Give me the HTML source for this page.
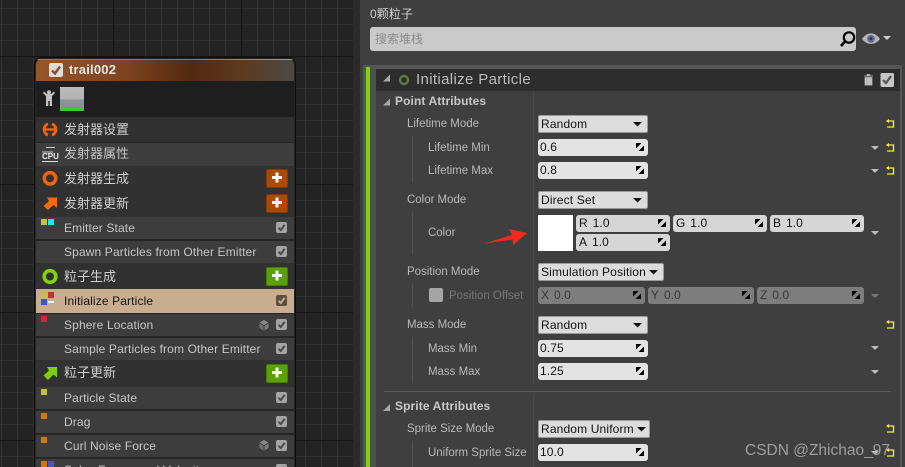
<!DOCTYPE html>
<html><head><meta charset="utf-8"><style>
html,body{margin:0;padding:0;width:905px;height:467px;overflow:hidden}
body{position:relative;background:#232323;font-family:"Liberation Sans","Noto Sans CJK SC",sans-serif;font-size:12px;color:#c8c8c8}
div,svg{position:absolute;box-sizing:border-box}
#clip{left:0;top:0;width:905px;height:467px;overflow:hidden}
#bg{left:0;top:0;width:353px;height:467px;background-color:#232323;background-image:linear-gradient(90deg,#141414 1px,transparent 1px),linear-gradient(#141414 1px,transparent 1px),linear-gradient(90deg,#303030 1px,transparent 1px),linear-gradient(#303030 1px,transparent 1px);background-size:128px 100%,100% 128px,16px 100%,100% 16px;background-position:113px 0,0 56px,1px 0,0 8px}
.t{white-space:nowrap;line-height:16px;height:16px}
.r{left:1px;width:258px;height:22px;background:#3d3d3d}
.g{left:1px;width:258px;background:#313131}
.n{left:29px;letter-spacing:.13px;color:#c6c6c6}
.c{font-size:13px;left:29px;color:#cfcfcf;line-height:18px;height:18px}
.l{color:#b9b9b9;font-size:11.5px;letter-spacing:-.02px;white-space:nowrap;line-height:16px;height:16px;margin-top:1px}
.f{background:#e3e3e3;border-radius:3px;color:#111;line-height:17px;height:17px;padding-left:2px;white-space:nowrap;letter-spacing:.1px}
.d{background:#dcdcdc;border:1px solid #9a9a9a;border-radius:2px;color:#111;line-height:16px;height:18px;padding-left:2px;white-space:nowrap;letter-spacing:.15px}
.f2{background:#d6d6d6;word-spacing:-1px;padding-left:3px}
.f3{background:#7d7d7d;color:#3a3a3a;word-spacing:-1px;padding-left:3px}
.v{background:#4f4f4f;width:1px}
.s{width:6px;height:6px}
</style></head><body><div id="clip">
<div id="bg"></div>
<div style="left:353px;top:0;width:7px;height:467px;background:#2a2a2a"></div>
<div style="left:360px;top:0;width:545px;height:467px;background:#3f3f3f"></div>

<!-- node -->
<div style="left:34px;top:57px;width:262px;height:410px;background:#0c0c0c;border-radius:8px 8px 0 0"></div>
<div style="left:35px;top:58px;width:260px;height:409px;background:#262626;border-radius:7px 7px 0 0;overflow:hidden">
  <div style="left:1px;top:1px;width:258px;height:22px;background:linear-gradient(90deg,#95562a 0%,#7e4420 35%,#53290f 60%,#5d3a20 80%,#4a4a48 100%);border-radius:6px 6px 0 0"></div>
  <div style="left:1px;top:1px;width:258px;height:1px;background:linear-gradient(90deg,#b0754a,#a06a40 60%,#999)"></div>
  <div style="left:1px;top:23px;width:258px;height:36px;background:#1d1e1d"></div>
  <div class="g" style="top:59px;height:25px"></div>
  <div class="r" style="top:85px;height:23px;background:#3e3e3e"></div>
  <div class="g" style="top:108px;height:51px"></div>
  <div class="r" style="top:159px"></div>
  <div class="r" style="top:183px"></div>
  <div class="g" style="top:205px;height:26px"></div>
  <div class="r" style="top:231px;height:24px;background:#c8ae8e"></div>
  <div class="r" style="top:256px"></div>
  <div class="r" style="top:280px"></div>
  <div class="g" style="top:302px;height:27px"></div>
  <div class="r" style="top:329px"></div>
  <div class="r" style="top:353px"></div>
  <div class="r" style="top:377px"></div>
  <div class="r" style="top:401px"></div>
</div>
<div style="left:49px;top:63px;width:14px;height:14px;background:#e0dcd8;border-radius:2px"></div>
<svg style="left:49px;top:63px" width="14" height="14"><path d="M3 7.500L6 10.500L11 3.500" fill="none" stroke="#7d5237" stroke-width="2.400"/></svg>
<div class="t" style="left:69px;top:62px;font-size:13px;font-weight:bold;color:#e6e6e6;letter-spacing:.2px">trail002</div>
<svg style="left:42px;top:90px" width="14" height="17"><path d="M1 3L4 6V16H6.300V11H7.700V16H10V6L13 3L12 1.500L9 4H5L2 1.500Z" fill="#c2c2c2"/><circle cx="7" cy="2.300" r="2" fill="#c2c2c2"/></svg>
<div style="left:60px;top:87px;width:24px;height:24px;background:linear-gradient(#bcbcbc 0,#b2b2b2 12px,#8f969a 13px,#868c90 21px,#3fc63f 21px,#3fc63f 24px)"></div>

<svg style="left:42px;top:121px" width="17" height="17"><path d="M6 2.900A6 6 0 0 0 6 14.100M10 2.900A6 6 0 0 1 10 14.100" fill="none" stroke="#ee6410" stroke-width="3"/><path d="M3 8.500H13" stroke="#ee6410" stroke-width="2.400"/></svg>
<div class="t c" style="left:64px;top:121px">发射器设置</div>
<svg style="left:41px;top:146px" width="18" height="16"><path d="M1 6H12M14 1.500H5" stroke="#ccc" stroke-width="1"/><path d="M1 15.500H17" stroke="#ddd" stroke-width="1"/><text x="1" y="13" font-size="8" font-weight="bold" fill="#eee" font-family="Liberation Sans">CPU</text></svg>
<div class="t c" style="left:64px;top:145px;color:#c4c4c4">发射器属性</div>
<svg style="left:42px;top:170px" width="17" height="17"><circle cx="8" cy="8.300" r="5.700" fill="none" stroke="#ee6410" stroke-width="3.500"/></svg>
<div class="t c" style="left:64px;top:170px">发射器生成</div>
<div style="left:266px;top:169px;width:22px;height:19px;background:#ac4a04;border:1px solid #7f3a08;border-radius:2px"></div>
<svg style="left:266px;top:169px" width="22" height="19"><path d="M11 3.500V13.500M6 8.500H16" stroke="#f4f4f4" stroke-width="3"/></svg>
<svg style="left:42px;top:195px" width="17" height="16"><path d="M5 2.500H15V13L11.500 10L6 15L1.500 11L7 6Z" fill="#f26a12"/></svg>
<div class="t c" style="left:64px;top:195px">发射器更新</div>
<div style="left:266px;top:194px;width:22px;height:19px;background:#ac4a04;border:1px solid #7f3a08;border-radius:2px"></div>
<svg style="left:266px;top:194px" width="22" height="19"><path d="M11 3.500V13.500M6 8.500H16" stroke="#f4f4f4" stroke-width="3"/></svg>

<div class="s" style="left:41px;top:219px;background:#c4c040"></div>
<div class="s" style="left:48px;top:219px;background:#10f0f0"></div>
<div class="t n" style="left:64px;top:220px">Emitter State</div>
<div class="t n" style="left:64px;top:244px">Spawn Particles from Other Emitter</div>
<svg style="left:42px;top:268px" width="17" height="17"><circle cx="8" cy="8.500" r="5.800" fill="none" stroke="#84d10e" stroke-width="3.600"/></svg>
<div class="t c" style="left:64px;top:268px">粒子生成</div>
<div style="left:266px;top:267px;width:22px;height:19px;background:#5aa203;border:1px solid #4a7a08;border-radius:2px"></div>
<svg style="left:266px;top:267px" width="22" height="19"><path d="M11 3.500V13.500M6 8.500H16" stroke="#f4f4f4" stroke-width="3"/></svg>

<div class="s" style="left:41px;top:292px;background:#c4c040"></div>
<div class="s" style="left:48px;top:292px;background:#c83030"></div>
<div class="s" style="left:41px;top:299px;background:#4058c0"></div>
<div style="left:48px;top:301px;width:6px;height:2px;background:#eee"></div>
<div class="t n" style="left:64px;top:293px;color:#111">Initialize Particle</div>
<div class="s" style="left:41px;top:316px;background:#c03030"></div>
<div class="t n" style="left:64px;top:317px">Sphere Location</div>
<div class="t n" style="left:64px;top:341px">Sample Particles from Other Emitter</div>
<svg style="left:42px;top:365px" width="17" height="16"><path d="M5 2H15V12.500L11.500 9.500L6 15L1.500 10.500L7 5.500Z" fill="#7fcd0e"/></svg>
<div class="t c" style="left:64px;top:364px">粒子更新</div>
<div style="left:266px;top:364px;width:22px;height:19px;background:#5aa203;border:1px solid #4a7a08;border-radius:2px"></div>
<svg style="left:266px;top:364px" width="22" height="19"><path d="M11 3.500V13.500M6 8.500H16" stroke="#f4f4f4" stroke-width="3"/></svg>
<div class="s" style="left:41px;top:389px;background:#c4c040"></div>
<div class="t n" style="left:64px;top:390px">Particle State</div>
<div class="s" style="left:41px;top:413px;background:#d07808"></div>
<div class="t n" style="left:64px;top:414px">Drag</div>
<div class="s" style="left:41px;top:437px;background:#d07808"></div>
<div class="t n" style="left:64px;top:438px">Curl Noise Force</div>
<div class="s" style="left:41px;top:461px;background:#d07808"></div>
<div class="s" style="left:48px;top:461px;background:#4058c0"></div>
<div class="t n" style="left:64px;top:462px">Solve Forces and Velocity</div>

<svg style="left:0;top:0" width="905" height="467">
<defs>
<g id="ck"><rect width="11" height="11" rx="2" fill="#a4a4a4"/><path d="M2.500 5.800L4.800 8L8.700 2.800" fill="none" stroke="#4a4a4a" stroke-width="2"/></g>
<g id="cube"><path d="M5 0L9.500 2.500L5 5L.5 2.500Z" fill="#8a8a8a"/><path d="M.5 3.500L4.500 5.800V10.500L.5 8Z" fill="#6f6f6f"/><path d="M9.500 3.500L5.500 5.800V10.500L9.500 8Z" fill="#7d7d7d"/></g>
<g id="rs"><path d="M2 -3H7.500V3H1" fill="none" stroke="#f2f230" stroke-width="1.300"/><path d="M0 -3L3 -5V-1Z" fill="#f2f230"/></g>
<path id="fi" d="M0 0H5.500L0 5.500ZM8 8H2.500L8 2.500Z" fill="#000"/>
</defs>
<use href="#ck" x="276" y="222"/><use href="#ck" x="276" y="246"/>
<rect x="276" y="295" width="11" height="11" rx="2" fill="#5c4f40"/><path d="M278.500 300.800L280.800 303L284.700 297.800" fill="none" stroke="#c8ae8e" stroke-width="2"/>
<use href="#ck" x="276" y="319"/><use href="#ck" x="276" y="343"/><use href="#ck" x="276" y="392"/><use href="#ck" x="276" y="416"/><use href="#ck" x="276" y="440"/><use href="#ck" x="276" y="464"/>
<use href="#cube" x="259" y="320"/><use href="#cube" x="259" y="440"/>
</svg>

<!-- right panel -->
<div class="t" style="left:370px;top:6px;color:#d0d0d0;letter-spacing:.1px">0颗粒子</div>
<div style="left:370px;top:27px;width:486px;height:24px;background:#cacaca;border-radius:3px"></div>
<div class="t" style="left:375px;top:31px;color:#8c8c8c">搜索堆栈</div>
<svg style="left:838px;top:29px" width="20" height="20"><circle cx="11" cy="8.500" r="5.200" fill="none" stroke="#000" stroke-width="2.200"/><path d="M7 12.500L3 17" stroke="#000" stroke-width="2.600"/></svg>
<svg style="left:861px;top:30px" width="34" height="18"><path d="M1 9C6 1.500 14 1.500 19 9C14 15.500 6 15.500 1 9Z" fill="#b5b5b5"/><circle cx="10" cy="8.800" r="3.800" fill="#5a6a8c"/><circle cx="10" cy="8.800" r="1.500" fill="#2c3448"/><path d="M22 6H30L26 10Z" fill="#cfcfcf"/></svg>

<div style="left:363px;top:65px;width:539px;height:402px;background:#565656"></div>
<div style="left:366px;top:67px;width:4px;height:400px;background:#7fd30b"></div>
<div style="left:370px;top:69px;width:6px;height:398px;background:#4f4f4f"></div>
<div style="left:376px;top:69px;width:524px;height:398px;background:#3f3f3f"></div>
<div style="left:376px;top:69px;width:524px;height:22px;background:#2d2d2d"></div>
<svg style="left:376px;top:69px" width="524" height="44">
<path d="M7 12.500L14 12.500L14 5.500Z" fill="#a8a8a8"/>
<circle cx="28" cy="11" r="4" fill="none" stroke="#5f7a3a" stroke-width="2.400"/>
<path d="M7 36.500H14V29.500Z" fill="#a8a8a8"/>
<path d="M488 7H497M491 7V5.500H494V7M489 8.500H496V16H489Z" fill="#bdbdbd" stroke="#bdbdbd" stroke-width=".7"/>
<rect x="504.500" y="4" width="13.500" height="14" rx="1.500" fill="#c6c6c6"/><path d="M507 11L510 14L515 7" fill="none" stroke="#555" stroke-width="2.200"/>
</svg>
<div class="t" style="left:416px;top:71px;font-size:15px;height:18px;line-height:18px;color:#bcbcbc;letter-spacing:.35px">Initialize Particle</div>
<div class="t" style="left:395px;top:93px;font-weight:bold;color:#c8c8c8;letter-spacing:.1px">Point Attributes</div>

<div class="v" style="left:533px;top:91px;height:293px;background:#4a4a4a"></div>
<div class="v" style="left:533px;top:396px;height:71px;background:#4a4a4a"></div>
<div class="v" style="left:412px;top:136px;height:46px"></div>
<div class="v" style="left:412px;top:212px;height:42px"></div>
<div class="v" style="left:412px;top:284px;height:23px"></div>
<div class="v" style="left:412px;top:337px;height:46px"></div>
<div class="v" style="left:412px;top:441px;height:26px"></div>
<div style="left:384px;top:391px;width:507px;height:1px;background:#585858"></div>

<div class="l" style="left:407px;top:115px">Lifetime Mode</div>
<div class="l" style="left:428px;top:139px">Lifetime Min</div>
<div class="l" style="left:428px;top:162px">Lifetime Max</div>
<div class="l" style="left:407px;top:191px">Color Mode</div>
<div class="l" style="left:428px;top:224px">Color</div>
<div class="l" style="left:407px;top:263px">Position Mode</div>
<div style="left:429px;top:288px;width:14px;height:14px;background:#a6a6a6;border-radius:2px"></div>
<div class="l" style="left:449px;top:287px;color:#757575">Position Offset</div>
<div class="l" style="left:407px;top:316px">Mass Mode</div>
<div class="l" style="left:428px;top:340px">Mass Min</div>
<div class="l" style="left:428px;top:363px">Mass Max</div>
<div class="t" style="left:395px;top:398px;font-weight:bold;color:#c8c8c8;letter-spacing:.1px">Sprite Attributes</div>
<div class="l" style="left:407px;top:420px">Sprite Size Mode</div>
<div class="l" style="left:428px;top:444px">Uniform Sprite Size</div>

<div class="d" style="left:538px;top:115px;width:110px">Random</div>
<div class="f" style="left:538px;top:139px;width:110px">0.6</div>
<div class="f" style="left:538px;top:162px;width:110px">0.8</div>
<div class="d" style="left:538px;top:191px;width:110px">Direct Set</div>
<div style="left:538px;top:215px;width:35px;height:36px;background:#fff"></div>
<div class="f f2" style="left:576px;top:215px;width:94px">R&nbsp;&nbsp;1.0</div>
<div class="f f2" style="left:673px;top:215px;width:94px">G&nbsp;&nbsp;1.0</div>
<div class="f f2" style="left:770px;top:215px;width:94px">B&nbsp;&nbsp;1.0</div>
<div class="f f2" style="left:576px;top:234px;width:94px">A&nbsp;&nbsp;1.0</div>
<div class="d" style="left:538px;top:263px;width:126px">Simulation Position</div>
<div class="f f3" style="left:538px;top:287px;width:107px">X&nbsp;&nbsp;0.0</div>
<div class="f f3" style="left:648px;top:287px;width:106px">Y&nbsp;&nbsp;0.0</div>
<div class="f f3" style="left:757px;top:287px;width:107px">Z&nbsp;&nbsp;0.0</div>
<div class="d" style="left:538px;top:316px;width:110px">Random</div>
<div class="f" style="left:538px;top:340px;width:110px">0.75</div>
<div class="f" style="left:538px;top:363px;width:110px">1.25</div>
<div class="d" style="left:538px;top:420px;width:112px">Random Uniform</div>
<div class="f" style="left:538px;top:444px;width:110px">10.0</div>

<svg style="left:0;top:0" width="905" height="467">
<use href="#fi" x="636" y="143"/><use href="#fi" x="636" y="166"/>
<use href="#fi" x="658" y="219"/><use href="#fi" x="755" y="219"/><use href="#fi" x="852" y="219"/><use href="#fi" x="658" y="238"/>
<use href="#fi" x="633" y="291"/><use href="#fi" x="742" y="291"/><use href="#fi" x="852" y="291"/>
<use href="#fi" x="636" y="344"/><use href="#fi" x="636" y="367"/><use href="#fi" x="636" y="448"/>
<path d="M633 122H642L637.500 126.500Z M633 198H642L637.500 202.500Z M649 270H658L653.500 274.500Z M633 323H642L637.500 327.500Z M637 427H646L641.500 431.500Z" fill="#111"/>
<path d="M871 146H879L875 150Z M871 169H879L875 173Z M871 231H879L875 235Z M871 346H879L875 350Z M871 370H879L875 374Z M871 451H879L875 455Z" fill="#bcbcbc"/>
<path d="M871 294H879L875 298Z" fill="#777"/>
<use href="#rs" x="886" y="124"/><use href="#rs" x="886" y="148"/><use href="#rs" x="886" y="171"/><use href="#rs" x="886" y="325"/><use href="#rs" x="886" y="429"/><use href="#rs" x="886" y="453"/>
<path d="M383 411H390V404Z" fill="#a8a8a8"/>
<path d="M484 243.500L512 235L509 229L527 233L513 245L512.500 239.500Z" fill="#f5281c"/>
<text x="745" y="455" font-family="Liberation Sans" font-size="15.500" fill="#a8a8a8" fill-opacity=".9">CSDN @Zhichao_97</text>
</svg>
</div></body></html>
